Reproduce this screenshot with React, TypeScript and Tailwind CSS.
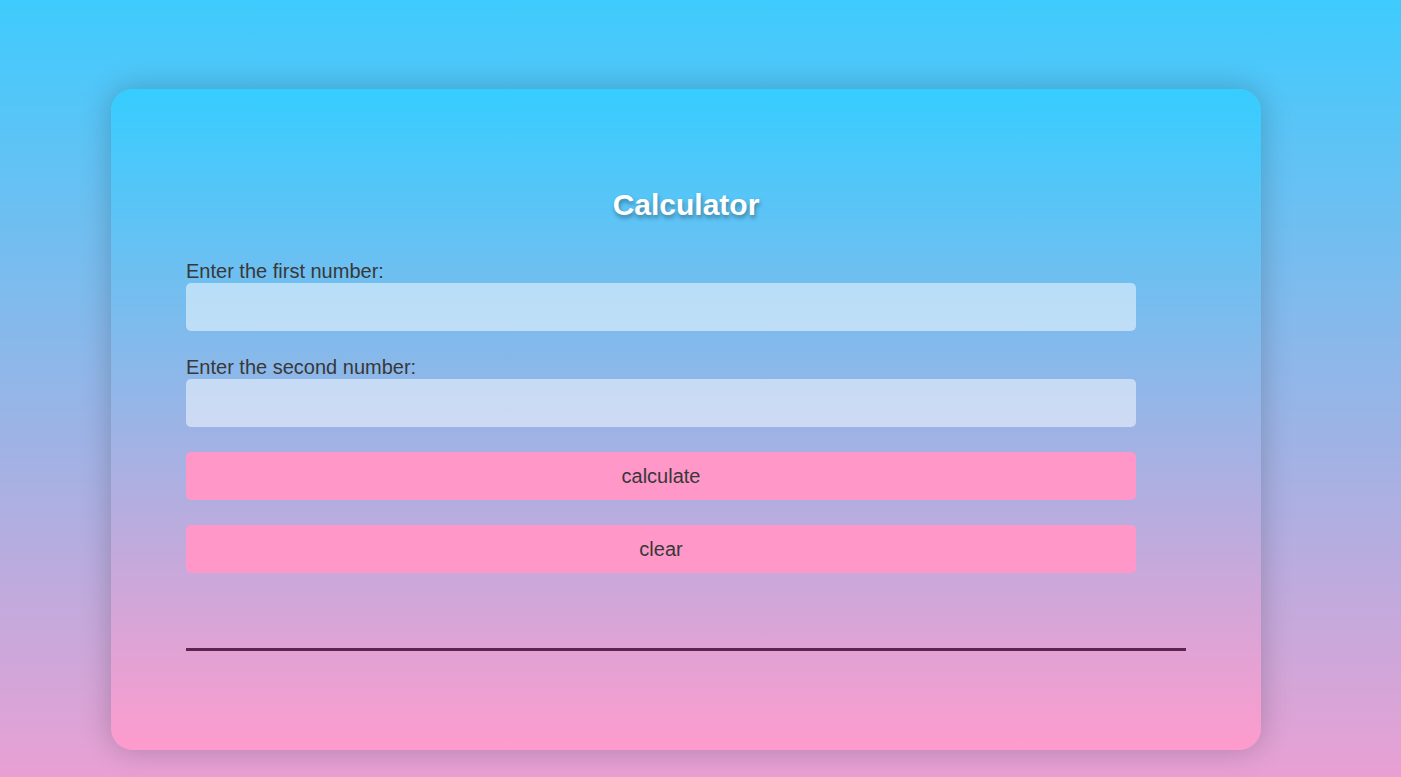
export default function App() {
  return (
    <div
      className="min-h-screen w-full bg-linear-to-b/srgb from-[#3ecbfd] to-[#e9a0d3] pl-[111px] pt-[89px] pb-[27px]"
      style={{ fontFamily: '"Liberation Sans", Arial, sans-serif' }}
    >
      <div className="w-[1150px] rounded-[22px] bg-linear-to-b/srgb from-[#36cdff] to-[#ff9bcd] px-[75px] pt-[99px] pb-[99px] shadow-[0_0_30px_rgba(0,0,0,0.22)]">
        <h1 className="text-center text-[30px] font-bold leading-[34px] text-white [text-shadow:1px_3px_4px_rgba(0,0,0,0.35)]">
          Calculator
        </h1>
        <div className="mt-[38px] flex flex-col">
          <label className="text-[20px] leading-[23px] text-[#383838]">Enter the first number:</label>
          <input
            type="text"
            className="h-[48px] w-[950px] rounded-[5px] bg-white/50 outline-none"
          />
          <label className="mt-[25px] text-[20px] leading-[23px] text-[#383838]">Enter the second number:</label>
          <input
            type="text"
            className="h-[48px] w-[950px] rounded-[5px] bg-white/50 outline-none"
          />
          <button className="mt-[25px] h-[48px] w-[950px] rounded-[5px] bg-[#ff97c9] text-[20px] text-[#383838]">
            calculate
          </button>
          <button className="mt-[25px] h-[48px] w-[950px] rounded-[5px] bg-[#ff97c9] text-[20px] text-[#383838]">
            clear
          </button>
          <div className="h-[78px] w-[1000px] border-b-[3px] border-[#5c2550]"></div>
        </div>
      </div>
    </div>
  );
}
